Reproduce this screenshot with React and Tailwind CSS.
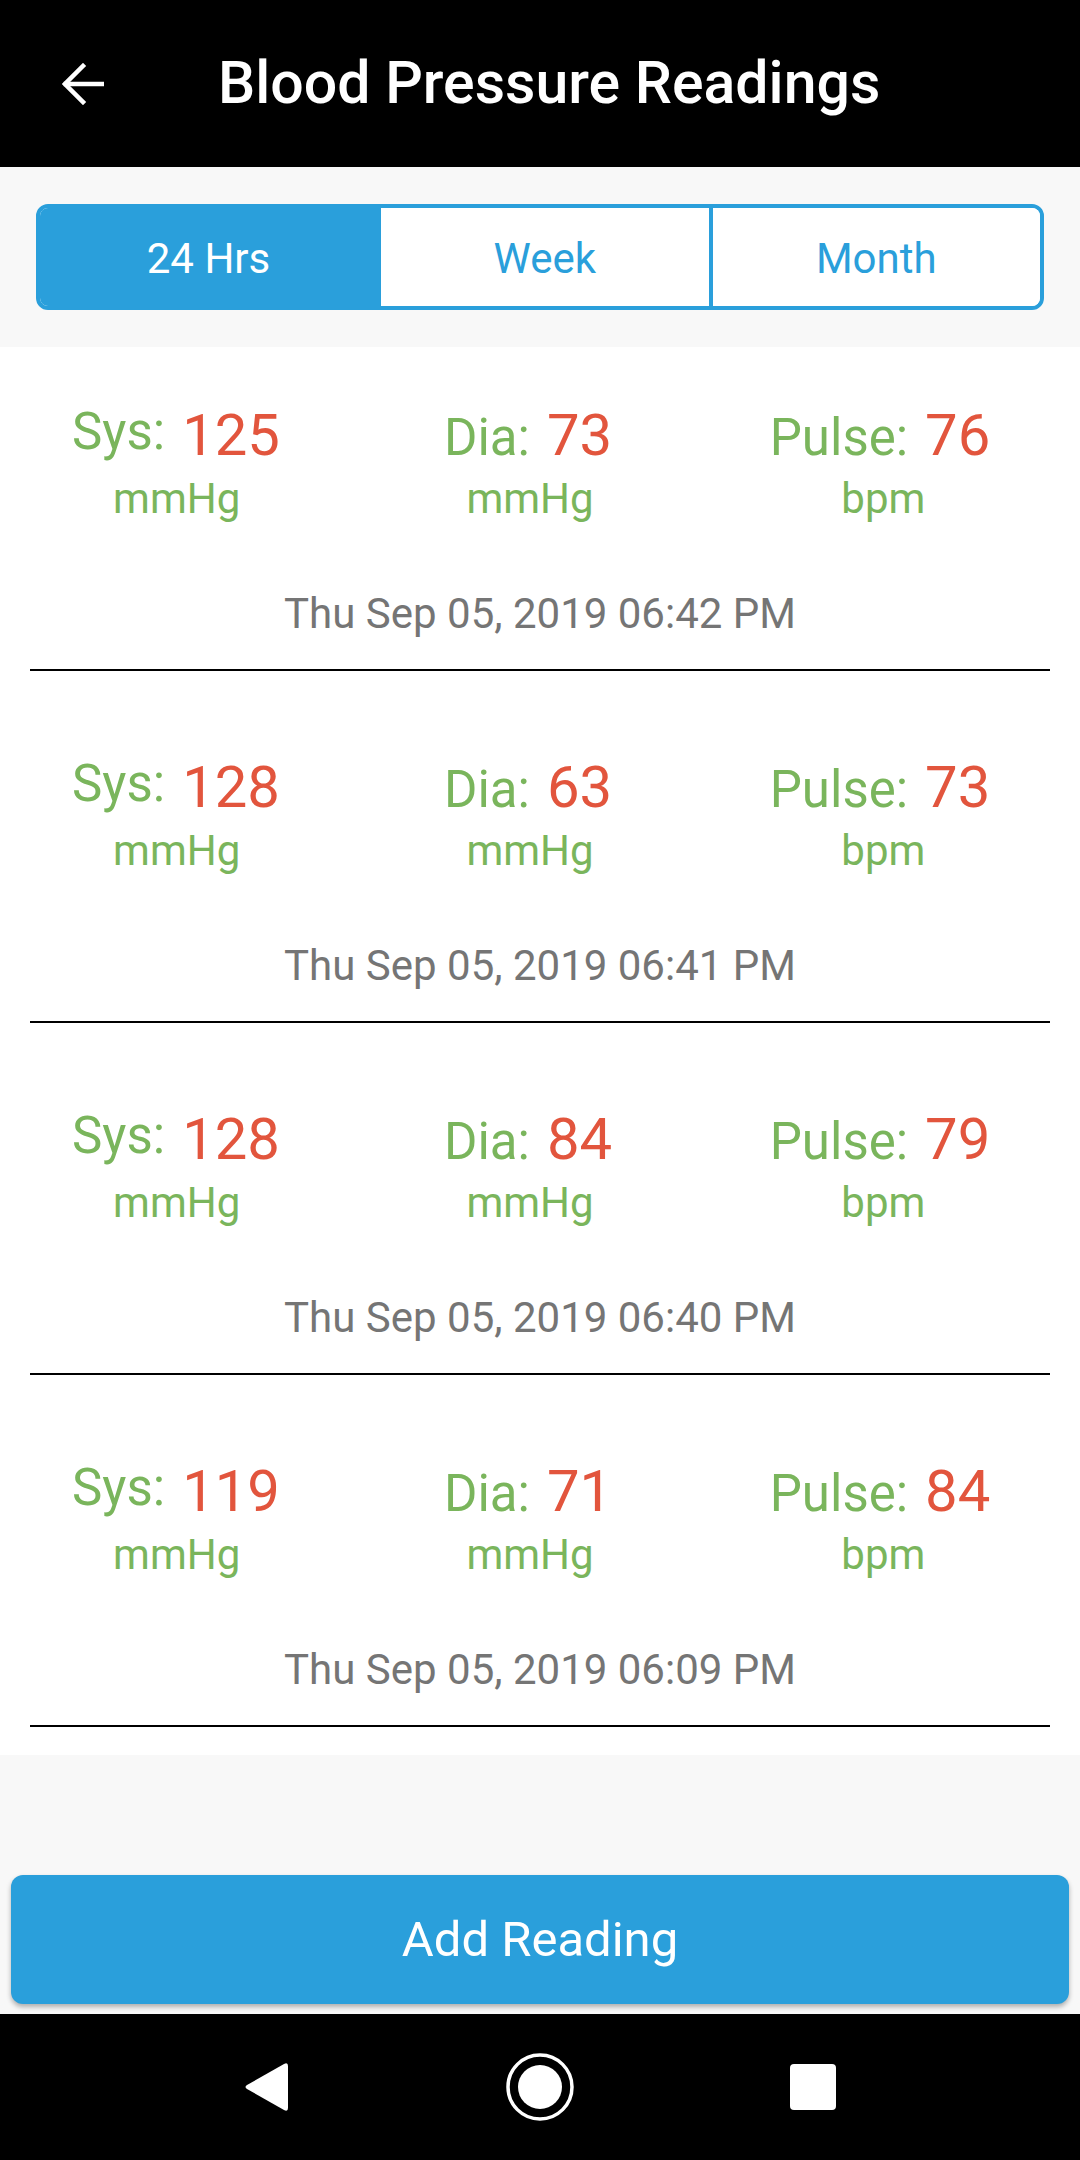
import { useState } from 'react';

const readings = [
  { sys: 125, dia: 73, pulse: 76, date: 'Thu Sep 05, 2019 06:42 PM' },
  { sys: 128, dia: 63, pulse: 73, date: 'Thu Sep 05, 2019 06:41 PM' },
  { sys: 128, dia: 84, pulse: 79, date: 'Thu Sep 05, 2019 06:40 PM' },
  { sys: 119, dia: 71, pulse: 84, date: 'Thu Sep 05, 2019 06:09 PM' },
];

const tabs = ['24 Hrs', 'Week', 'Month'];

const Reading = ({ reading, first }) => (
  <div className={first ? 'pt-[45px]' : 'pt-[73px]'}>
    <div className="grid w-[1056px] grid-cols-3">
      <div className="flex h-[70px] items-baseline justify-center gap-[17px]">
        <span className="-translate-y-[6px] text-[51px] text-[#7ab55c]">Sys:</span>
        <span className="text-[58px] text-[#e2553d]">{reading.sys}</span>
      </div>
      <div className="flex h-[70px] items-baseline justify-center gap-[17px]">
        <span className="text-[51px] text-[#7ab55c]">Dia:</span>
        <span className="text-[58px] text-[#e2553d]">{reading.dia}</span>
      </div>
      <div className="flex h-[70px] items-baseline justify-center gap-[17px]">
        <span className="text-[51px] text-[#7ab55c]">Pulse:</span>
        <span className="text-[58px] text-[#e2553d]">{reading.pulse}</span>
      </div>
    </div>
    <div className="mt-[12px] grid w-[1060px] grid-cols-3 text-[42px] leading-[50px] text-[#7ab55c]">
      <div className="text-center">mmHg</div>
      <div className="text-center">mmHg</div>
      <div className="text-center">bpm</div>
    </div>
    <div className="mt-[65px] text-center text-[42px] leading-[50px] text-[#757575]">
      {reading.date}
    </div>
    <div className="mx-[30px] mt-[30px] h-[2px] bg-black" />
  </div>
);

const App = () => {
  const [tab, setTab] = useState(0);

  return (
    <div className="flex h-[2160px] w-[1080px] flex-col overflow-hidden bg-[#f8f8f8] font-['Roboto',sans-serif]">
      {/* header */}
      <div className="flex h-[167px] shrink-0 items-center bg-black">
        <svg className="ml-[62px] h-[42px] w-[42px]" viewBox="0 0 42 42" fill="none" stroke="white" strokeWidth="4.5" strokeLinecap="square">
          <path d="M40 21H4" />
          <path d="M21 3L3 21l18 18" />
        </svg>
        <h1 className="ml-[114px] text-[59px] font-medium text-white">Blood Pressure Readings</h1>
      </div>

      {/* range tabs */}
      <div className="h-[180px] shrink-0 px-[36px] pt-[37px]">
        <div className="flex h-[106px] overflow-hidden rounded-[12px] border-[4px] border-[#2a9fdb] bg-white">
          {tabs.map((label, i) => (
            <button
              key={label}
              onClick={() => setTab(i)}
              className={`flex items-center justify-center pt-[3px] text-[42px] ${i === 0 ? 'w-[337px] shrink-0' : 'flex-1 border-l-[4px] border-[#2a9fdb]'} ${tab === i ? 'bg-[#2a9fdb] text-white' : 'bg-white text-[#2a9fdb]'}`}
            >
              {label}
            </button>
          ))}
        </div>
      </div>

      {/* readings list */}
      <div className="h-[1408px] shrink-0 bg-white">
        {readings.map((r, i) => (
          <Reading key={i} reading={r} first={i === 0} />
        ))}
      </div>

      {/* add button */}
      <div className="flex h-[259px] shrink-0 flex-col justify-end px-[11px] pb-[10px]">
        <button className="flex h-[129px] items-center justify-center rounded-[12px] bg-[#2a9fdb] text-[49px] text-white shadow-[0_3px_5px_rgba(0,0,0,0.3)]">
          Add Reading
        </button>
      </div>

      {/* android nav bar */}
      <div className="flex h-[146px] shrink-0 items-center justify-center gap-[215px] bg-black">
        <svg className="h-[50px] w-[46px]" viewBox="0 0 46 50">
          <path d="M44 4 L44 46 Q44 50 40 48 L3 27 Q0 25 3 23 L40 2 Q44 0 44 4Z" fill="white" />
        </svg>
        <svg className="h-[70px] w-[70px]" viewBox="0 0 70 70">
          <circle cx="35" cy="35" r="32" fill="none" stroke="white" strokeWidth="3.5" />
          <circle cx="35" cy="35" r="22" fill="white" />
        </svg>
        <svg className="h-[46px] w-[46px]" viewBox="0 0 46 46">
          <rect x="0" y="0" width="46" height="46" rx="4" fill="white" />
        </svg>
      </div>
    </div>
  );
};

export default App;
